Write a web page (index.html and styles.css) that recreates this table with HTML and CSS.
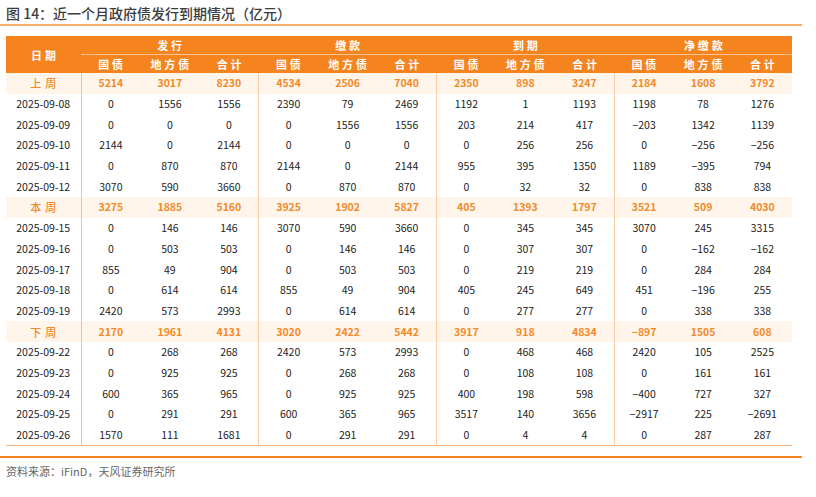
FILE: index.html
```html
<!DOCTYPE html>
<html lang="zh">
<head>
<meta charset="utf-8">
<link rel="stylesheet" href="styles.css">
</head>
<body>
<div class="page">
  <h1 class="title">图 14：近一个月政府债发行到期情况（亿元）</h1>
  <div class="title-rule"></div>
  <table class="grid">
    <colgroup>
      <col class="c-date">
      <col><col><col><col><col><col><col><col><col><col><col><col>
    </colgroup>
    <thead>
      <tr class="h1">
        <th rowspan="2" class="hdate">日期</th>
        <th colspan="3" class="grp">发行</th>
        <th colspan="3" class="grp">缴款</th>
        <th colspan="3" class="grp">到期</th>
        <th colspan="3" class="grp last">净缴款</th>
      </tr>
      <tr class="h2">
        <th>国债</th><th>地方债</th><th>合计</th>
        <th>国债</th><th>地方债</th><th>合计</th>
        <th>国债</th><th>地方债</th><th>合计</th>
        <th>国债</th><th>地方债</th><th>合计</th>
      </tr>
    </thead>
    <tbody id="body"></tbody>
  </table>
  <div class="bottom-rule"></div>
  <p class="source">资料来源：iFinD，天风证券研究所</p>
</div>
<script>
const rows = [
  ["上周",5214,3017,8230,4534,2506,7040,2350,898,3247,2184,1608,3792],
  ["2025-09-08",0,1556,1556,2390,79,2469,1192,1,1193,1198,78,1276],
  ["2025-09-09",0,0,0,0,1556,1556,203,214,417,-203,1342,1139],
  ["2025-09-10",2144,0,2144,0,0,0,0,256,256,0,-256,-256],
  ["2025-09-11",0,870,870,2144,0,2144,955,395,1350,1189,-395,794],
  ["2025-09-12",3070,590,3660,0,870,870,0,32,32,0,838,838],
  ["本周",3275,1885,5160,3925,1902,5827,405,1393,1797,3521,509,4030],
  ["2025-09-15",0,146,146,3070,590,3660,0,345,345,3070,245,3315],
  ["2025-09-16",0,503,503,0,146,146,0,307,307,0,-162,-162],
  ["2025-09-17",855,49,904,0,503,503,0,219,219,0,284,284],
  ["2025-09-18",0,614,614,855,49,904,405,245,649,451,-196,255],
  ["2025-09-19",2420,573,2993,0,614,614,0,277,277,0,338,338],
  ["下周",2170,1961,4131,3020,2422,5442,3917,918,4834,-897,1505,608],
  ["2025-09-22",0,268,268,2420,573,2993,0,468,468,2420,105,2525],
  ["2025-09-23",0,925,925,0,268,268,0,108,108,0,161,161],
  ["2025-09-24",600,365,965,0,925,925,400,198,598,-400,727,327],
  ["2025-09-25",0,291,291,600,365,965,3517,140,3656,-2917,225,-2691],
  ["2025-09-26",1570,111,1681,0,291,291,0,4,4,0,287,287]
];
const tb = document.getElementById("body");
rows.forEach(r => {
  const tr = document.createElement("tr");
  const sum = r[0].indexOf("周") >= 0;
  if (sum) tr.className = "sum";
  r.forEach((v, i) => {
    const td = document.createElement("td");
    td.textContent = (typeof v === "number" && v < 0) ? "\u2212" + Math.abs(v) : v;
    if (i === 0) td.className = "date";
    else if (i % 3 === 0 && i < 12) td.className = "gend";
    tr.appendChild(td);
  });
  tb.appendChild(tr);
});
</script>
</body>
</html>
```
FILE: styles.css
```css
* { box-sizing: border-box; }
html, body { margin: 0; padding: 0; background: #fff; }
body {
  font-family: "Noto Sans CJK SC", "Noto Sans", sans-serif;
  color: #222;
}
.page { width: 816px; height: 497px; padding-top: 4px; }
.title {
  margin: 0 0 0 6px;
  font-size: 14px;
  line-height: 18px;
  font-weight: 500;
  color: #3c3c3c;
}
.title-rule {
  width: 802px;
  height: 2px;
  background: #f7ae6c;
  margin-top: 2px;
}
.grid {
  margin: 10px 0 0 6px;
  width: 786px;
  border-collapse: collapse;
  table-layout: fixed;
  font-size: 10.5px;
}
.c-date { width: 75px; }
.grid th {
  background: #f5841f;
  color: #fff;
  font-weight: 600;
  font-size: 11px;
  letter-spacing: 3px;
  padding: 0 0 0 3px;
  text-align: center;
}
.h1 th { height: 18px; }
.h1 th.grp { border-bottom: 1px solid #f9c394; }
.h1 th.grp + th.grp { border-left: 1px solid #f5841f; }
.h2 th { height: 19px; }
.grid td {
  height: 20.7px;
  padding: 0;
  text-align: center;
  line-height: 14px;
}
.grid td.date { border-right: 1px solid #f9bf8c; }
.grid td.gend { border-right: 1px solid #f9cca5; }
.grid tr.sum td {
  background: #fff5ea;
  color: #f28a2a;
  font-weight: 700;
}
.grid tr.sum td.date { letter-spacing: 4px; padding-left: 4px; font-weight: 500; font-size: 11px; }
.grid tbody tr:last-child td { border-bottom: 1px solid #f7b27a; }
.bottom-rule {
  width: 802px;
  height: 2px;
  background: #f5841f;
  margin-top: 10px;
}
.source {
  margin: 6px 0 0 6px;
  font-size: 11px;
  line-height: 14px;
  color: #666;
}
```
